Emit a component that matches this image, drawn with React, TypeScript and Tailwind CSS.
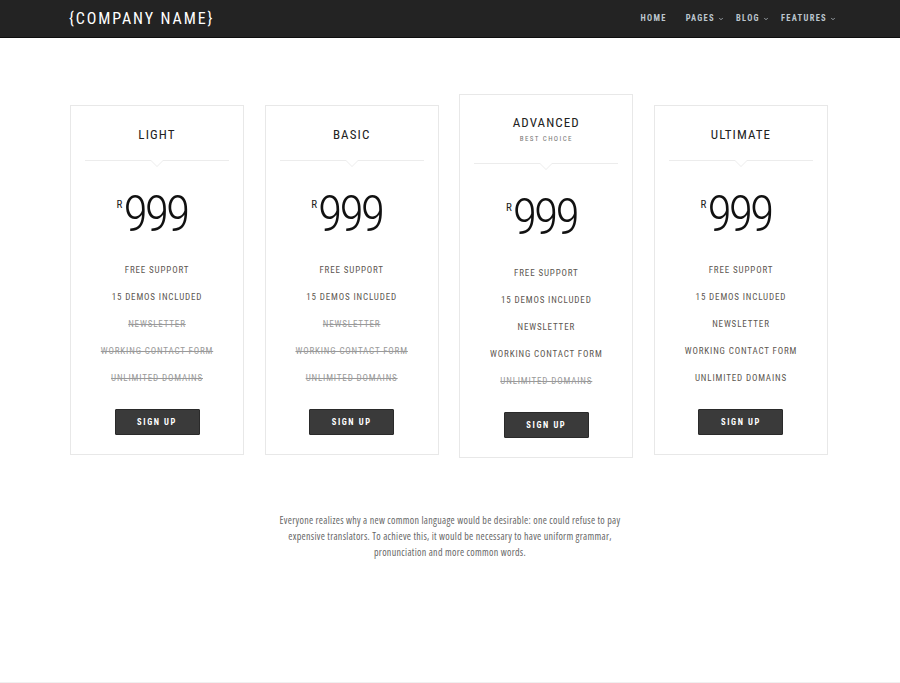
import { ChevronDown } from "lucide-react";

const cond = "font-['Roboto_Condensed','Liberation_Sans_Narrow','DejaVu_Sans_Condensed',sans-serif]";

interface Feature {
  label: string;
  off?: boolean;
}

interface Plan {
  name: string;
  tag?: string;
  features: Feature[];
}

const labels = [
  "FREE SUPPORT",
  "15 DEMOS INCLUDED",
  "NEWSLETTER",
  "WORKING CONTACT FORM",
  "UNLIMITED DOMAINS",
];

// everything from index `offFrom` on is crossed out
const withOff = (offFrom: number): Feature[] =>
  labels.map((label, i) => ({ label, off: i >= offFrom }));

const plans: Plan[] = [
  { name: "LIGHT", features: withOff(2) },
  { name: "BASIC", features: withOff(3).map((f, i) => (i === 2 ? { ...f, off: true } : f)) },
  { name: "ADVANCED", tag: "BEST CHOICE", features: withOff(4) },
  { name: "ULTIMATE", features: withOff(5) },
];

const NavItem = ({ label, menu }: { label: string; menu?: boolean }) => (
  <span className={`flex items-center gap-[3px] ${menu ? "" : "mr-[7px]"}`}>
    {label}
    {menu && <ChevronDown className="w-[6px] h-[6px]" strokeWidth={3} />}
  </span>
);

const NavBar = () => (
  <header className="h-[38px] bg-[#232323] border-b border-[#0e0e0e]">
    <div className="w-[768px] mx-auto h-full flex items-center justify-between">
      <div className={`${cond} ml-[3px] text-[16px] tracking-[1.9px] text-white`}>{"{COMPANY NAME}"}</div>
      <nav className={`${cond} flex items-center gap-[12px] text-[8.5px] font-bold tracking-[1.3px] text-[#bcc6ce] -mr-[2px]`}>
        <NavItem label="HOME" />
        <NavItem label="PAGES" menu />
        <NavItem label="BLOG" menu />
        <NavItem label="FEATURES" menu />
      </nav>
    </div>
  </header>
);

const Divider = () => (
  <div className="relative mx-[14px] h-px bg-[#ececec]">
    <div className="absolute left-1/2 -translate-x-1/2 top-0 w-0 h-0 border-l-[7px] border-r-[7px] border-t-[7px] border-l-transparent border-r-transparent border-t-[#ececec]" />
    <div className="absolute left-1/2 -translate-x-1/2 -top-px w-0 h-0 border-l-[7px] border-r-[7px] border-t-[7px] border-l-transparent border-r-transparent border-t-white" />
  </div>
);

const PriceCard = ({ plan }: { plan: Plan }) => {
  const featured = !!plan.tag;
  return (
    <div
      className={`w-[174px] bg-white border border-[#e8e8e8] flex flex-col items-center pb-[19px] ${
        featured ? "-mt-[11px]" : ""
      }`}
    >
      <div className={`w-full ${featured ? "pt-[19px] h-[68px]" : "pt-[20px] h-[54px]"}`}>
        <h3 className={`${cond} text-center text-[13px] leading-[18px] tracking-[1.1px] text-[#222]`}>{plan.name}</h3>
        {plan.tag && (
          <p className={`${cond} text-center text-[7px] leading-[10px] tracking-[1.4px] text-[#777] mt-[2px]`}>
            {plan.tag}
          </p>
        )}
      </div>
      <div className="w-full">
        <Divider />
      </div>
      <div className={`flex items-start mt-[33px] h-[44px] pr-[10px] ${cond}`}>
        <span className="text-[11px] leading-[13px] text-[#222] mt-[4px] mr-[1px]">R</span>
        <span className="text-[50px] leading-[40px] font-light text-[#111] tracking-[-3px]">999</span>
      </div>
      <ul className={`${cond} mt-[19px] flex flex-col items-center text-[9px] tracking-[0.85px]`}>
        {plan.features.map((f) => (
          <li
            key={f.label}
            className={`h-[27px] leading-[27px] ${f.off ? "line-through text-[#9a9a9a]" : "text-[#5d5751]"}`}
          >
            {f.label}
          </li>
        ))}
      </ul>
      <button
        className={`${cond} mt-[17px] w-[85px] h-[26px] bg-[#3a3a3a] border border-[#2a2a2a] text-white text-[8.5px] font-bold tracking-[1.6px] rounded-[1px]`}
      >
        SIGN UP
      </button>
    </div>
  );
};

export default function App() {
  return (
    <div className="min-h-[683px] bg-white flex flex-col">
      <NavBar />
      <main className="flex-1">
        <div className="w-[760px] mx-auto mt-[67px]">
          <section className="w-[758px] flex items-start justify-between">
            {plans.map((p) => (
              <PriceCard key={p.name} plan={p} />
            ))}
          </section>
        </div>
        <p className="w-[356px] mx-auto mt-[54px] text-center font-['Open_Sans',sans-serif] font-stretch-condensed text-[10px] tracking-[0.3px] leading-[16px] text-[#666]">
          Everyone realizes why a new common language would be desirable: one could refuse to pay expensive
          translators. To achieve this, it would be necessary to have uniform grammar, pronunciation and more common
          words.
        </p>
      </main>
      <div className="h-px bg-[#f0f0f0]" />
    </div>
  );
}
